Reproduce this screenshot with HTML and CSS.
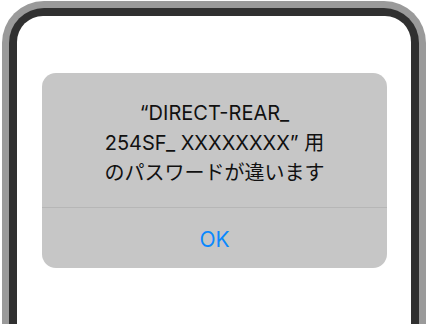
FILE: index.html
```html
<!DOCTYPE html>
<html lang="ja">
<head>
<meta charset="utf-8">
<link rel="stylesheet" href="styles.css">
</head>
<body>
<div class="phone">
  <div class="bezel">
    <div class="screen">
      <div class="alert">
        <div class="alert-body">
          <p class="alert-title">“DIRECT-REAR_<br>254SF_ XXXXXXXX” 用<br>のパスワードが違います</p>
        </div>
        <div class="alert-actions">
          <button class="alert-btn">OK</button>
        </div>
      </div>
    </div>
  </div>
</div>
</body>
</html>
```
FILE: styles.css
```css
html, body {
  margin: 0;
  padding: 0;
  background: #ffffff;
  overflow: hidden;
  height: 324px;
}
body {
  padding: 1px 2px 0 2px;
  font-family: Inter, "Noto Sans CJK JP", sans-serif;
}
.phone {
  background: #9a9a9a;
  padding: 7px;
  border-radius: 42px;
  height: 420px;
}
.bezel {
  background: #303030;
  padding: 8px;
  border-radius: 35px;
  height: 100%;
  box-sizing: border-box;
}
.screen {
  background: #ffffff;
  border-radius: 26px;
  height: 100%;
  box-sizing: border-box;
  padding: 57px 24px 0 25px;
}
.alert {
  background: #c6c6c6;
  border-radius: 14px;
  height: 195px;
  display: flex;
  flex-direction: column;
}
.alert-body {
  height: 135px;
  border-bottom: 1px solid #b6b6b6;
  box-sizing: border-box;
  display: flex;
  align-items: center;
  justify-content: center;
}
.alert-title {
  margin: 0;
  text-align: center;
  font-size: 20px;
  line-height: 30px;
  color: #111111;
  padding-top: 5px;
}
.alert-actions {
  flex: 1;
  display: flex;
  align-items: center;
  justify-content: center;
}
.alert-btn {
  border: 0;
  background: transparent;
  font-family: Inter, "Noto Sans CJK JP", sans-serif;
  font-size: 21px;
  color: #0a88ff;
  padding: 0;
  margin-top: 3px;
}
```
